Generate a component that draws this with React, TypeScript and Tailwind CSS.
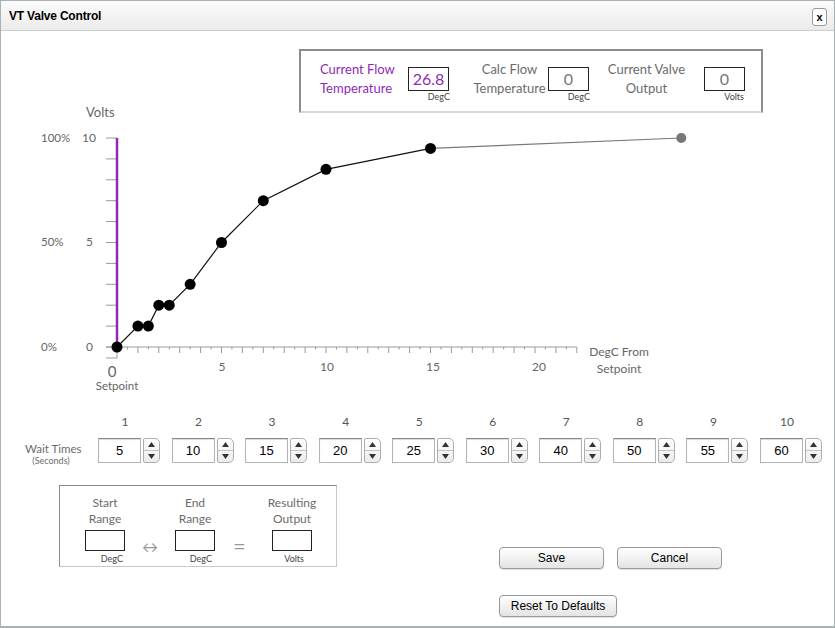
import React from "react";

const waitTimes = [5, 10, 15, 20, 25, 30, 40, 50, 55, 60];

const points: [number, number][] = [
	[0, 0],
	[1, 1],
	[1.5, 1],
	[2, 2],
	[2.5, 2],
	[3.5, 3],
	[5, 5],
	[7, 7],
	[10, 8.5],
	[15, 9.5],
];

const X = (v: number) => 116 + v * 20.9;
const Y = (v: number) => 347 - v * 20.9;

function Chart() {
	const label = { fontFamily: "Lato, 'Open Sans', sans-serif", fill: "#666" };
	const unitTicks = Array.from({ length: 22 }, (_, i) => i + 1);
	const halfTicks = Array.from({ length: 22 }, (_, i) => i + 0.5);
	const voltTicks = Array.from({ length: 11 }, (_, i) => i);
	const last = points[points.length - 1];

	return (
		<svg width={835} height={314} viewBox="0 100 835 314" className="block -mt-[13px]">
			{/* axes */}
			<line x1={116} y1={138} x2={116} y2={358} stroke="#9a9a9a" />
			<line x1={105} y1={347} x2={X(22)} y2={347} stroke="#9a9a9a" />
			{voltTicks.map((v) => (
				<line key={v} x1={105} y1={Y(v)} x2={116} y2={Y(v)} stroke="#9a9a9a" />
			))}
			<line x1={105} y1={358} x2={116} y2={358} stroke="#9a9a9a" />
			{unitTicks.map((u) => (
				<line key={u} x1={X(u)} y1={347} x2={X(u)} y2={353} stroke="#9a9a9a" />
			))}
			{halfTicks.map((u) => (
				<line key={u} x1={X(u)} y1={347} x2={X(u)} y2={349.5} stroke="#9a9a9a" />
			))}

			{/* labels */}
			<text x={85} y={117} fontSize={13} style={label}>Volts</text>
			<text x={40} y={142} fontSize={11.5} style={label}>100%</text>
			<text x={40} y={246} fontSize={11.5} style={label}>50%</text>
			<text x={40} y={351} fontSize={11.5} style={label}>0%</text>
			<text x={95} y={142} fontSize={12} textAnchor="end" style={label}>10</text>
			<text x={92} y={246} fontSize={12} textAnchor="end" style={label}>5</text>
			<text x={92} y={351} fontSize={12} textAnchor="end" style={label}>0</text>
			<text x={111} y={377} fontSize={15} textAnchor="middle" style={label}>0</text>
			<text x={116} y={390} fontSize={11.5} textAnchor="middle" style={label}>Setpoint</text>
			<text x={221} y={371} fontSize={12} textAnchor="middle" style={label}>5</text>
			<text x={326} y={371} fontSize={12} textAnchor="middle" style={label}>10</text>
			<text x={432} y={371} fontSize={12} textAnchor="middle" style={label}>15</text>
			<text x={538} y={371} fontSize={12} textAnchor="middle" style={label}>20</text>
			<text x={618} y={356} fontSize={12} textAnchor="middle" style={label}>DegC From</text>
			<text x={618} y={373} fontSize={12} textAnchor="middle" style={label}>Setpoint</text>

			{/* setpoint marker */}
			<line x1={116} y1={138} x2={116} y2={347} stroke="#8e2ab8" strokeWidth={2.5} />

			{/* curve */}
			<line x1={X(last[0])} y1={Y(last[1])} x2={X(27)} y2={Y(10)} stroke="#7a7a7a" strokeWidth={1.2} />
			<polyline
				points={points.map(([x, y]) => `${X(x)},${Y(y)}`).join(" ")}
				fill="none"
				stroke="#111"
				strokeWidth={1.2}
			/>
			<circle cx={X(27)} cy={Y(10)} r={5} fill="#777" />
			{points.map(([x, y], i) => (
				<circle key={i} cx={X(x)} cy={Y(y)} r={5.5} fill="#000" />
			))}
		</svg>
	);
}

function Spinner({ value }: { value: number }) {
	return (
		<div className="flex items-center h-[25px]">
			<div className="w-[43px] h-[25px] border border-[#b4b4b4] border-t-[#888] bg-white flex items-center justify-center text-[13px] text-black font-['Liberation_Sans',Arial,sans-serif] shadow-[inset_0_1px_1px_rgba(0,0,0,0.15)]">
				{value}
			</div>
			<div className="ml-[2px] w-[17px] h-[25px] border border-[#adadad] rounded-r-[5px] rounded-l-[2px] bg-gradient-to-b from-white to-[#ececec] flex flex-col">
				<div className="flex-1 flex items-center justify-center border-b border-[#c4c4c4]">
					<svg width="7" height="5" viewBox="0 0 7 5">
						<path d="M3.5 0L7 5H0z" fill="#333" />
					</svg>
				</div>
				<div className="flex-1 flex items-center justify-center">
					<svg width="7" height="5" viewBox="0 0 7 5">
						<path d="M0 0H7L3.5 5z" fill="#333" />
					</svg>
				</div>
			</div>
		</div>
	);
}

function MacButton({ label, w }: { label: string; w: string }) {
	return (
		<button
			className={`${w} h-[22px] rounded-[4px] border border-[#999] bg-gradient-to-b from-white to-[#e4e4e4] text-[12px] text-black font-['Liberation_Sans',Arial,sans-serif] shadow-[0_1px_1px_rgba(0,0,0,0.12)]`}
		>
			{label}
		</button>
	);
}

function RangeCol({ top, bottom, unit, unitPad }: { top: string; bottom: string; unit: string; unitPad: string }) {
	return (
		<div className="w-[60px] flex flex-col items-center">
			<div className="text-[12px] leading-[16px] text-[#6b6b6b] text-center">
				{top}
				<br />
				{bottom}
			</div>
			<div className="mt-[3px] w-[40px] h-[21px] border border-[#222] bg-white" />
			<div className={`mt-[3px] w-[40px] text-right ${unitPad} text-[9px] leading-[10px] text-[#444]`}>{unit}</div>
		</div>
	);
}

export default function App() {
	return (
		<div className="w-[835px] h-[628px] bg-white border border-[#aab3b3] border-b-2 flex flex-col font-['Lato','Open_Sans',sans-serif]">
			{/* title bar */}
			<div className="h-[30px] shrink-0 border-b border-[#c9cfcf] bg-gradient-to-b from-[#fbfbfb] to-[#ebebeb] flex items-center justify-between pl-[8px] pr-[7px]">
				<span className="text-[12px] font-bold text-black font-['Liberation_Sans',Arial,sans-serif] tracking-[-0.2px]">
					VT Valve Control
				</span>
				<button className="w-[15px] h-[18px] mt-[3px] rounded-[3px] border border-[#9a9a9a] bg-white flex items-center justify-center text-[11px] font-bold leading-none text-black font-['Liberation_Sans',Arial,sans-serif]">
					x
				</button>
			</div>

			{/* current readings */}
			<div className="ml-[298px] mt-[18px] w-[464px] h-[64px] shrink-0 border-2 border-[#8c8c8c] border-b-[#d6d6d6] flex items-start pl-[19px]">
				<div className="w-[78px] pt-[9px] text-[13px] leading-[19px] text-[#8e2ab8]">
					Current Flow
					<br />
					Temperature
				</div>
				<div className="ml-[10px] mt-[16px] w-[41px]">
					<div className="h-[24px] border border-[#222] flex items-center justify-center text-[16px] text-[#8e2ab8]">26.8</div>
					<div className="mt-[1px] -mr-[1px] text-right text-[9px] leading-[10px] text-[#444]">DegC</div>
				</div>
				<div className="ml-[22px] w-[77px] pt-[9px] text-[13px] leading-[19px] text-[#6b6b6b] text-center">
					Calc Flow
					<br />
					Temperature
				</div>
				<div className="mt-[16px] w-[41px]">
					<div className="h-[24px] border border-[#222] flex items-center justify-center text-[16px] text-[#777]">0</div>
					<div className="mt-[1px] -mr-[1px] text-right text-[9px] leading-[10px] text-[#444]">DegC</div>
				</div>
				<div className="ml-[16px] w-[83px] pt-[9px] text-[13px] leading-[19px] text-[#6b6b6b] text-center">
					Current Valve
					<br />
					Output
				</div>
				<div className="ml-[16px] mt-[16px] w-[41px]">
					<div className="h-[24px] border border-[#222] flex items-center justify-center text-[16px] text-[#777]">0</div>
					<div className="mt-[1px] pr-[1px] text-right text-[9px] leading-[10px] text-[#444]">Volts</div>
				</div>
			</div>

			<Chart />

			{/* wait times */}
			<div className="flex pl-[24px] shrink-0">
				<div className="w-[52px] pt-[29px] text-center text-[#6b6b6b]">
					<div className="text-[11.5px] leading-[12px] whitespace-nowrap">Wait Times</div>
					<div className="mt-[1px] text-[9px] leading-[10px]">(Seconds)</div>
				</div>
				<div className="ml-[21px] w-[724px] flex justify-between">
					{waitTimes.map((v, i) => (
						<div key={i} className="flex flex-col">
							<div className="w-[54px] h-[16px] text-center text-[12px] leading-[16px] text-[#555]">{i + 1}</div>
							<div className="mt-[8px]">
								<Spinner value={v} />
							</div>
						</div>
					))}
				</div>
			</div>

			{/* range calculator + actions */}
			<div className="flex mt-[19px] shrink-0">
				<div className="ml-[58px] w-[278px] h-[82px] border border-[#8c8c8c] border-r-[#c8c8c8] border-b-[#c8c8c8] flex pl-[15px] pt-[9px]">
					<RangeCol top="Start" bottom="Range" unit="DegC" unitPad="pr-[2px]" />
					<div className="w-[30px] pt-[44px] text-center text-[16px] leading-[16px] text-[#999]">↔</div>
					<RangeCol top="End" bottom="Range" unit="DegC" unitPad="pr-[3px]" />
					<div className="w-[37px] pr-[8px] pt-[43px] text-center text-[22px] leading-[16px] text-[#999]">=</div>
					<RangeCol top="Resulting" bottom="Output" unit="Volts" unitPad="pr-[8px]" />
				</div>
				<div className="ml-[162px] mt-[62px] flex flex-col">
					<div className="flex gap-[13px]">
						<MacButton label="Save" w="w-[105px]" />
						<MacButton label="Cancel" w="w-[105px]" />
					</div>
					<div className="mt-[23px]">
						<MacButton label="Reset To Defaults" w="w-[118px]" />
					</div>
				</div>
			</div>
		</div>
	);
}
